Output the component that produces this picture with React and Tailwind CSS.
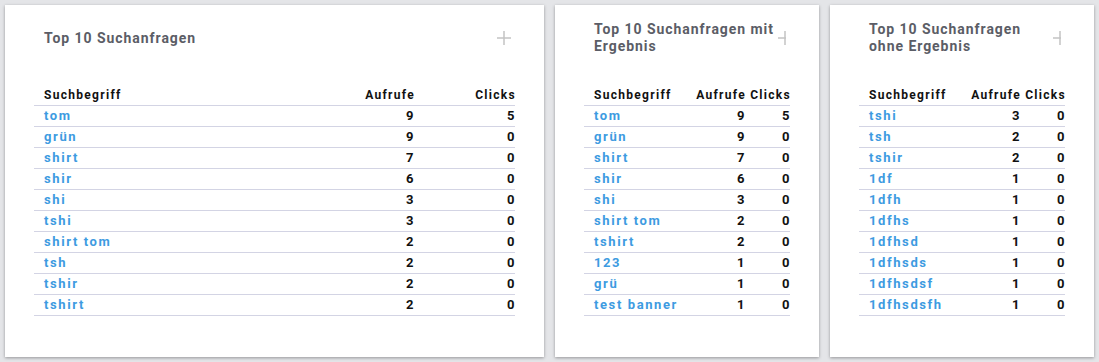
import React from "react";

const allQueries = [
  ["tom", 9, 5],
  ["grün", 9, 0],
  ["shirt", 7, 0],
  ["shir", 6, 0],
  ["shi", 3, 0],
  ["tshi", 3, 0],
  ["shirt tom", 2, 0],
  ["tsh", 2, 0],
  ["tshir", 2, 0],
  ["tshirt", 2, 0],
];

const withResult = [
  ["tom", 9, 5],
  ["grün", 9, 0],
  ["shirt", 7, 0],
  ["shir", 6, 0],
  ["shi", 3, 0],
  ["shirt tom", 2, 0],
  ["tshirt", 2, 0],
  ["123", 1, 0],
  ["grü", 1, 0],
  ["test banner", 1, 0],
];

const withoutResult = [
  ["tshi", 3, 0],
  ["tsh", 2, 0],
  ["tshir", 2, 0],
  ["1df", 1, 0],
  ["1dfh", 1, 0],
  ["1dfhs", 1, 0],
  ["1dfhsd", 1, 0],
  ["1dfhsds", 1, 0],
  ["1dfhsdsf", 1, 0],
  ["1dfhsdsfh", 1, 0],
];

const Plus = () => (
  <svg width="14" height="14" viewBox="0 0 14 14" className="shrink-0">
    <path d="M7 0v14M0 7h14" stroke="#c4c4c4" strokeWidth="1.5" />
  </svg>
);

const Card = ({ title, rows, cols, wide, className }) => (
  <div
    className={
      "bg-white shadow-[0_1px_3px_rgba(0,0,0,0.35)] px-[29px] pt-[16px] pb-[41px] " +
      className
    }
  >
    <div className="flex items-center h-[34px]">
      <div className="flex-1 pl-[10px] text-[14px] leading-[17px] font-bold tracking-[0.95px] text-[#5b5d66]">
        {title}
      </div>
      <div
        className={
          wide
            ? "w-[14px] mr-[4px] overflow-hidden"
            : "w-[8px] mr-[4px] overflow-hidden"
        }
      >
        <Plus />
      </div>
    </div>

    <div className="mt-[30px] font-bold">
      <div
        className={
          "grid h-[21px] items-center border-b border-[#d3d4e4] text-[#111] text-[12px] tracking-[1.3px] " +
          cols
        }
      >
        <div className="pl-[10px]">Suchbegriff</div>
        <div className="text-right mr-[-1px]">Aufrufe</div>
        <div className="text-right mr-[-1px]">Clicks</div>
      </div>
      {rows.map(([term, views, clicks]) => (
        <div
          key={term}
          className={
            "grid h-[21px] items-center border-b border-[#d3d4e4] text-[13px] tracking-[1.6px] " +
            cols
          }
        >
          <div className="pl-[10px] text-[#3d9be1]">{term}</div>
          <div className="text-right mr-[-1px] text-[#111]">{views}</div>
          <div className="text-right mr-[-1px] text-[#111]">{clicks}</div>
        </div>
      ))}
    </div>
  </div>
);

const App = () => {
  return (
    <div
      className="w-[1099px] h-[362px] bg-[#e4e5e8] flex gap-[11px] px-[5px] pt-[5px] items-start"
      style={{ fontFamily: "Roboto, 'Liberation Sans', sans-serif" }}
    >
      <Card
        title="Top 10 Suchanfragen"
        rows={allQueries}
        cols="grid-cols-[1fr_100px_101px]"
        wide
        className="w-[539px]"
      />
      <Card
        title="Top 10 Suchanfragen mit Ergebnis"
        rows={withResult}
        cols="grid-cols-[1fr_50px_45px]"
        className="flex-1"
      />
      <Card
        title="Top 10 Suchanfragen ohne Ergebnis"
        rows={withoutResult}
        cols="grid-cols-[1fr_50px_45px]"
        className="flex-1"
      />
    </div>
  );
};

export default App;
